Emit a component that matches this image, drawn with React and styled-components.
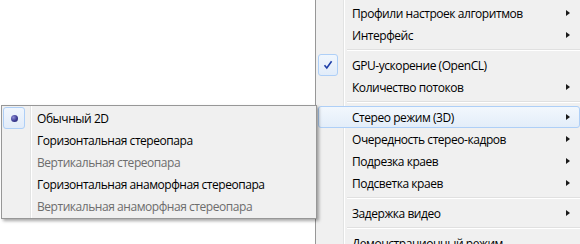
import React from "react";
import styled, { createGlobalStyle, css } from "styled-components";

const GlobalStyle = createGlobalStyle`
  html, body { margin: 0; padding: 0; background: #ffffff; }
  body { font-family: "Open Sans", "Noto Sans", "DejaVu Sans", sans-serif; }
`;

const Page = styled.div`
  position: relative;
  width: 580px;
  height: 244px;
  overflow: hidden;
  background: #ffffff;
`;

const gutter = (offset) => css`
  background-image: linear-gradient(
    to right,
    transparent ${offset}px,
    #e2e3e3 ${offset}px,
    #e2e3e3 ${offset + 1}px,
    #ffffff ${offset + 1}px,
    #ffffff ${offset + 2}px,
    transparent ${offset + 2}px
  );
  background-repeat: no-repeat;
`;

const MainMenu = styled.div`
  margin-left: 315px;
  margin-top: 0;
  width: 262px;
  padding: 2px 3px 2px 2px;
  border: 1px solid #979797;
  border-top: none;
  background-color: #f0f0f0;
  ${gutter(27)}
`;

const SubMenu = styled.div`
  position: absolute;
  left: 1px;
  top: 105px;
  width: 312px;
  padding: 1px;
  border: 1px solid #979797;
  background-color: #f0f0f0;
  ${gutter(28)}
  box-shadow: 2px 2px 3px rgba(0, 0, 0, 0.35);
`;

const Item = styled.div`
  position: relative;
  height: 22px;
  display: flex;
  align-items: center;
  padding: 0 9px 0 33px;
  box-sizing: border-box;
  font-size: 12px;
  letter-spacing: -0.45px;
  color: ${(p) => (p.$disabled ? "#6d6d6d" : "#000000")};
  border: 1px solid transparent;
  border-radius: 3px;
  ${(p) =>
    p.$hot &&
    css`
      border-color: #aecff7;
      background: linear-gradient(to bottom, #f2f7fd, #e3edf9);
    `}
`;

const Label = styled.span`
  flex: 1;
  white-space: nowrap;
`;

const Arrow = styled.span`
  width: 0;
  height: 0;
  border-top: 3.5px solid transparent;
  border-bottom: 3.5px solid transparent;
  border-left: 4px solid #1a1a1a;
`;

const MarkBox = styled.span`
  position: absolute;
  left: -1px;
  top: -1px;
  width: ${(p) => p.$size}px;
  height: 22px;
  box-sizing: border-box;
  border: 1px solid #aecff7;
  border-radius: 3px;
  background: linear-gradient(to bottom, #f0f6fd, #e2ecf9);
  display: flex;
  align-items: center;
  justify-content: center;
`;

const Dot = styled.span`
  width: 7px;
  height: 7px;
  border-radius: 50%;
  background: radial-gradient(circle at 35% 35%, #8e8ed8 0%, #3c3c94 55%, #22226a 100%);
`;

const Separator = styled.div`
  height: 8px;
  display: flex;
  align-items: center;
  padding-left: 29px;
  &::after {
    content: "";
    flex: 1;
    height: 0;
    border-top: 1px solid #e0e0e0;
    border-bottom: 1px solid #ffffff;
  }
`;

const Check = () => (
  <svg width="10" height="10" viewBox="0 0 10 10">
    <path d="M1.5 5.2 L3.8 8 L8.6 1.2" fill="none" stroke="#1f3fa8" strokeWidth="1.6" />
  </svg>
);

export default function App() {
  return (
    <Page>
      <GlobalStyle />
      <MainMenu>
        <Item><Label>Профили настроек алгоритмов</Label><Arrow /></Item>
        <Item><Label>Интерфейс</Label><Arrow /></Item>
        <Separator />
        <Item>
          <MarkBox $size={20}><Check /></MarkBox>
          <Label>GPU-ускорение (OpenCL)</Label>
        </Item>
        <Item><Label>Количество потоков</Label><Arrow /></Item>
        <Separator />
        <Item $hot><Label>Стерео режим (3D)</Label><Arrow /></Item>
        <Item><Label>Очередность стерео-кадров</Label><Arrow /></Item>
        <Item><Label>Подрезка краев</Label><Arrow /></Item>
        <Item><Label>Подсветка краев</Label><Arrow /></Item>
        <Separator />
        <Item><Label>Задержка видео</Label><Arrow /></Item>
        <Separator />
        <Item><Label>Демонстрационный режим</Label></Item>
      </MainMenu>
      <SubMenu>
        <Item>
          <MarkBox $size={22}><Dot /></MarkBox>
          <Label>Обычный 2D</Label>
        </Item>
        <Item><Label>Горизонтальная стереопара</Label></Item>
        <Item $disabled><Label>Вертикальная стереопара</Label></Item>
        <Item><Label>Горизонтальная анаморфная стереопара</Label></Item>
        <Item $disabled><Label>Вертикальная анаморфная стереопара</Label></Item>
      </SubMenu>
    </Page>
  );
}
